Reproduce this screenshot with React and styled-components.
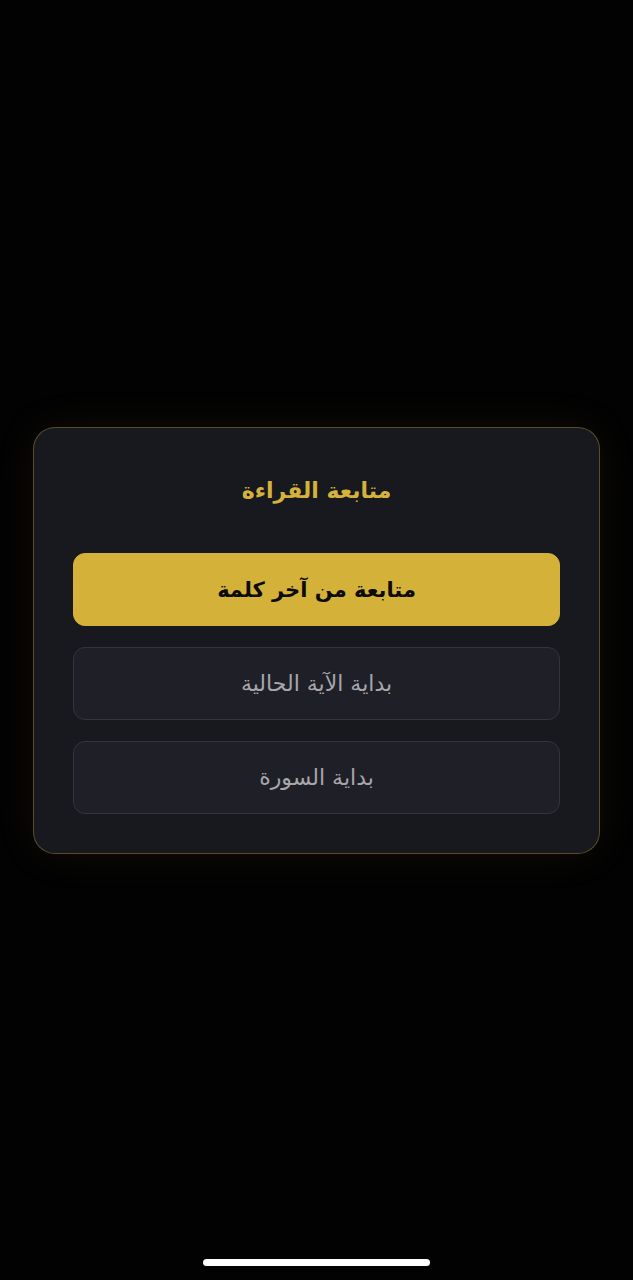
import React from 'react'
import styled, { createGlobalStyle } from 'styled-components'

const GlobalStyle = createGlobalStyle`
  html, body {
    margin: 0;
    padding: 0;
    background: #020203;
  }
  body {
    font-family: "DejaVu Sans", "Noto Sans", sans-serif;
  }
`

const Screen = styled.div`
  width: 633px;
  height: 1280px;
  background: #020203;
  display: flex;
  flex-direction: column;
  align-items: center;
  box-sizing: border-box;
  padding-top: 427px;
`

const Sheet = styled.div`
  width: 567px;
  box-sizing: border-box;
  direction: rtl;
  background: #18181f;
  border: 1px solid rgba(212, 178, 58, 0.35);
  border-radius: 22px;
  box-shadow: 0 0 46px rgba(212, 178, 58, 0.07);
  padding: 43px 39px 39px;
  display: flex;
  flex-direction: column;
  gap: 21px;
`

const Title = styled.h2`
  margin: 0 0 21px;
  text-align: center;
  font-size: 22px;
  font-weight: 700;
  line-height: 40px;
  color: #d4b23c;
`

const Choice = styled.button`
  height: 73px;
  width: 100%;
  box-sizing: border-box;
  border-radius: 12px;
  font-family: inherit;
  font-size: ${p => (p.$primary ? '21px' : '22px')};
  font-weight: ${p => (p.$primary ? 700 : 400)};
  color: ${p => (p.$primary ? '#0c0b08' : '#a6a6ab')};
  background: ${p => (p.$primary ? '#d4b23a' : '#1f1f27')};
  border: 1px solid ${p => (p.$primary ? '#d4b23a' : '#34343e')};
  display: flex;
  align-items: center;
  justify-content: center;
  cursor: pointer;
  padding: 0;
`

const Spacer = styled.div`
  flex: 1;
`

const HomeBar = styled.div`
  width: 227px;
  height: 7px;
  border-radius: 4px;
  background: #ffffff;
  margin-bottom: 14px;
`

const options = [
  { label: 'متابعة من آخر كلمة', primary: true },
  { label: 'بداية الآية الحالية' },
  { label: 'بداية السورة' },
]

export default function App() {
  return (
    <>
      <GlobalStyle />
      <Screen>
        <Sheet>
          <Title>متابعة القراءة</Title>
          {options.map(o => (
            <Choice key={o.label} $primary={o.primary}>
              {o.label}
            </Choice>
          ))}
        </Sheet>
        <Spacer />
        <HomeBar />
      </Screen>
    </>
  )
}
